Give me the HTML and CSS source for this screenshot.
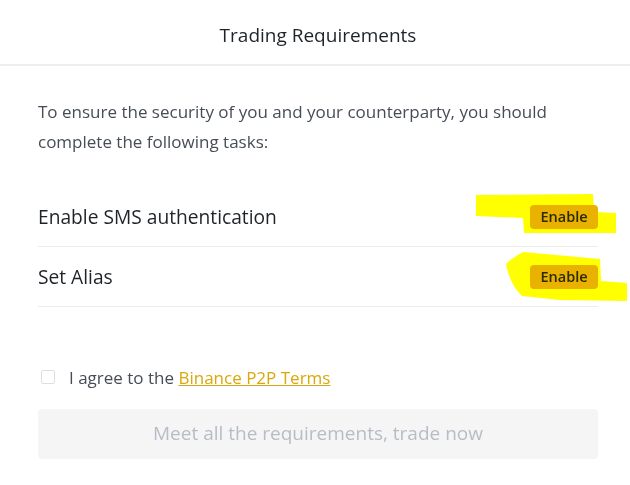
FILE: index.html
```html
<!DOCTYPE html>
<html lang="en">
<head>
<meta charset="utf-8">
<title>Trading Requirements</title>
<link rel="stylesheet" href="styles.css">
</head>
<body>
<div class="page">
  <header class="header">Trading Requirements</header>
  <main class="content">
    <p class="intro">To ensure the security of you and your counterparty, you should complete the following tasks:</p>
    <ul class="tasks">
      <li class="task">
        <span class="task-label">Enable SMS authentication</span>
        <button class="enable-btn" type="button">Enable</button>
      </li>
      <li class="task">
        <span class="task-label">Set Alias</span>
        <button class="enable-btn" type="button">Enable</button>
      </li>
    </ul>
    <label class="agree">
      <span class="checkbox"></span>
      <span class="agree-text">I agree to the <a class="terms" href="#">Binance P2P Terms</a></span>
    </label>
    <button class="trade-btn" type="button">Meet all the requirements, trade now</button>
  </main>
  <svg class="scribbles" width="630" height="485" viewBox="0 0 630 485" aria-hidden="true">
    <path d="M476 195 L593 194 L594 212 L616 213 L616 233 L524 233 L523 218 L476 216 Z"/>
    <path d="M523 252 L600 259 L601 281 L627 283 L627 301 L560 300 L522 296 Q510 285 506 264 Q512 258 523 252 Z"/>
  </svg>
</div>
</body>
</html>
```
FILE: styles.css
```css
* { box-sizing: border-box; }
html, body { margin: 0; padding: 0; background: #ffffff; }
body {
  font-family: "Open Sans", "Noto Sans", "Liberation Sans", sans-serif;
  color: #1e2329;
  width: 630px;
  height: 485px;
  overflow: hidden;
}
.page { position: relative; width: 630px; height: 485px; }
.header {
  height: 66px;
  border-bottom: 2px solid #eeeeee;
  display: flex;
  align-items: center;
  justify-content: center;
  font-size: 19px;
  padding-top: 6px;
  padding-left: 6px;
  color: #1e2329;
}
.content { padding: 0 32px 0 38px; }
.intro {
  margin: 31px 0 30px;
  font-size: 17px;
  line-height: 30px;
  color: #474d57;
}
.tasks { list-style: none; margin: 0; padding: 0; }
.task {
  height: 60px;
  border-bottom: 1px solid #eaecef;
  display: flex;
  align-items: center;
  justify-content: space-between;
}
.task-label { font-size: 19.2px; color: #1e2329; }
.enable-btn {
  width: 68px;
  height: 24px;
  border: none;
  border-radius: 4px;
  background: #eab200;
  color: #2b2a1c;
  font-family: inherit;
  font-size: 14.5px;
  font-weight: 600;
  padding: 0;
}
.agree {
  margin-top: 62px;
  height: 16px;
  display: flex;
  align-items: center;
}
.checkbox {
  width: 14px;
  height: 14px;
  margin-left: 3px;
  border: 1px solid #dcdfe3;
  border-radius: 2px;
  background: #fff;
}
.agree-text {
  margin-left: 14px;
  font-size: 17px;
  color: #474d57;
}
.terms { color: #d9a80c; text-decoration: underline; }
.trade-btn {
  display: block;
  width: 560px;
  height: 50px;
  margin-top: 24px;
  border: none;
  border-radius: 4px;
  background: #f5f5f5;
  color: #b7bdc6;
  font-family: inherit;
  font-size: 19px;
  padding: 0 0 2px;
}
.scribbles {
  position: absolute;
  left: 0;
  top: 0;
  pointer-events: none;
  mix-blend-mode: multiply;
}
.scribbles path { fill: #ffff00; }
```
